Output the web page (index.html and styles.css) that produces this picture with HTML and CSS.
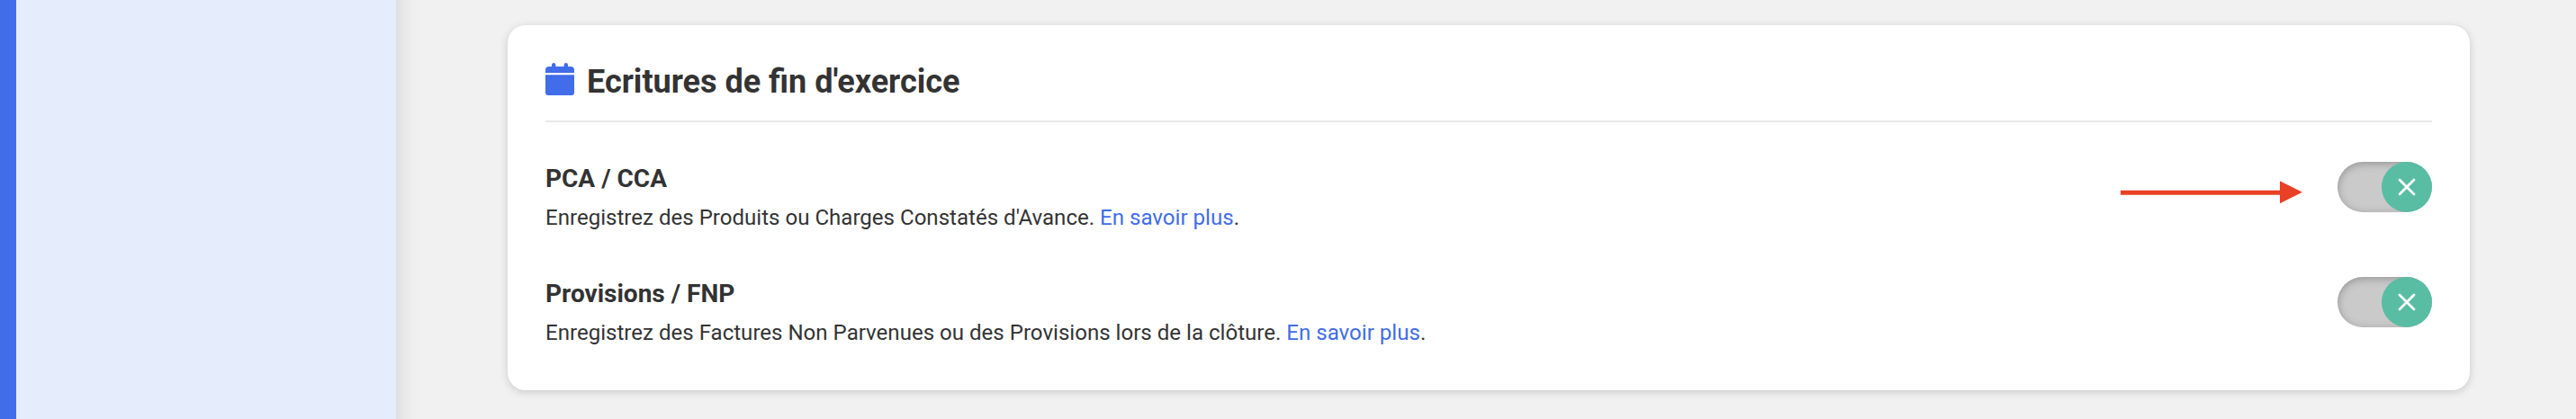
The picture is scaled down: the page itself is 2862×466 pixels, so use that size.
FILE: index.html
```html
<!DOCTYPE html>
<html lang="fr">
<head>
    <meta charset="UTF-8">
    <meta name="viewport" content="width=device-width, initial-scale=1.0">
    <title>Ecritures de fin d'exercice</title>
    <link rel="stylesheet" href="styles.css">
</head>
<body>

    <!-- Menu latéral -->
    <nav class="sidebar"></nav>

    <main class="content">
        <section class="card">
            <h2 class="card-title">
                <svg class="icon" width="32" height="36" viewBox="0 0 32 36">
                    <path d="M7 5V2.2a2.2 2.2 0 0 1 4.4 0V4h9.2V2.2a2.2 2.2 0 0 1 4.4 0V4h3a4 4 0 0 1 4 4v3H0V8a4 4 0 0 1 4-4h3zM0 13.3h32V33a3 3 0 0 1-3 3H3a3 3 0 0 1-3-3z"/>
                </svg>
                <span class="card-title-text">Ecritures de fin d'exercice</span>
            </h2>

            <div class="option">
                <div class="option-text">
                    <h3>PCA / CCA</h3>
                    <p>Enregistrez des Produits ou Charges Constatés d'Avance. <a href="#">En savoir plus</a>.</p>
                </div>
                <div class="toggle">
                    <span class="knob">
                        <svg width="20" height="20" viewBox="0 0 20 20"><path d="M2 2l16 16M18 2L2 18"/></svg>
                    </span>
                    <!-- Flèche qui pointe vers l'interrupteur -->
                    <svg class="arrow" width="202" height="26" viewBox="0 0 202 26">
                        <path d="M0 10.7h177V.3L202 12.8l-25 12.5V15.8H0z"/>
                    </svg>
                </div>
            </div>

            <div class="option">
                <div class="option-text">
                    <h3>Provisions / FNP</h3>
                    <p>Enregistrez des Factures Non Parvenues ou des Provisions lors de la clôture. <a href="#">En savoir plus</a>.</p>
                </div>
                <div class="toggle">
                    <span class="knob">
                        <svg width="20" height="20" viewBox="0 0 20 20"><path d="M2 2l16 16M18 2L2 18"/></svg>
                    </span>
                </div>
            </div>
        </section>
    </main>

</body>
</html>
```

FILE: styles.css
```css
* {
    box-sizing: border-box;
}

body {
    margin: 0;
    display: flex;
    min-height: 100vh;
    background-color: #f1f1f1;
    color: #333;
    font-family: Roboto, "Liberation Sans", sans-serif;
}

h2, h3, p {
    margin: 0;
}

/* Menu latéral */
.sidebar {
    width: 440px;
    flex-shrink: 0;
    border-left: 18px solid #416cea;
    background-color: #e5ecfc;
}

/* Le dégradé à gauche fait l'ombre du menu */
.content {
    flex: 1;
    padding: 28px 118px 32px 124px;
    background-image: linear-gradient(to right, rgba(0, 0, 0, 0.08), rgba(0, 0, 0, 0.04) 9px, rgba(0, 0, 0, 0.01) 18px, transparent 26px);
}

/* Carte */
.card {
    padding: 42px 42px 48px;
    border-radius: 20px;
    background-color: #fff;
    box-shadow: 0 2px 10px rgba(0, 0, 0, 0.17);
}

.card-title {
    display: flex;
    gap: 14px;
    margin-bottom: 44px;
    padding-bottom: 22px;
    border-bottom: 2px solid #e8e8e8;
    font-size: 36px;
    line-height: 42px;
    font-weight: 700;
}

.icon {
    fill: #416cea;
}

/* Ligne d'option */
.option {
    display: flex;
    justify-content: space-between;
    align-items: flex-start;
}

.option + .option {
    margin-top: 50px;
}

.option h3 {
    margin-bottom: 9px;
    font-size: 28px;
    line-height: 37px;
    font-weight: 700;
}

.option p {
    font-size: 24px;
    line-height: 32px;
    letter-spacing: 0.03px;
}

.option a {
    color: #416cea;
    text-decoration: none;
}

/* Interrupteur */
.toggle {
    position: relative;
    display: flex;
    justify-content: flex-end;
    width: 105px;
    height: 56px;
    border-radius: 28px;
    background-color: #cacaca;
    box-shadow: inset 0 2px 10px rgba(0, 0, 0, 0.27);
}

.knob {
    display: flex;
    justify-content: center;
    align-items: center;
    width: 56px;
    height: 56px;
    border-radius: 50%;
    background-color: #58bda3;
}

.knob path {
    fill: none;
    stroke: #fff;
    stroke-width: 2.8;
    stroke-linecap: round;
}

.arrow {
    position: absolute;
    top: 21px;
    right: 144px;
    fill: #ea4025;
}
```
